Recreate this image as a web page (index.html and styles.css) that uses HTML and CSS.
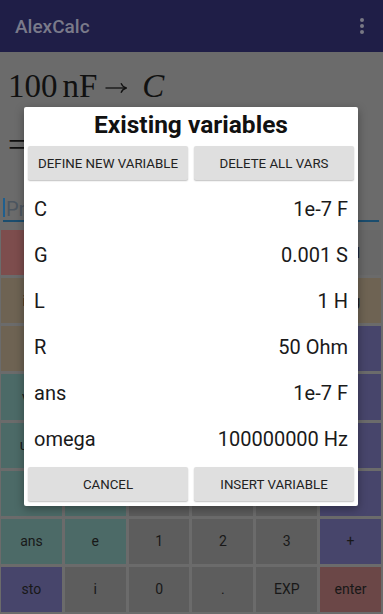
FILE: index.html
```html
<!DOCTYPE html>
<html lang="en">
<head>
<meta charset="utf-8">
<title>AlexCalc</title>
<link rel="stylesheet" href="styles.css">
</head>
<body>
<header class="appbar">
  <div class="title">AlexCalc</div>
  <div class="kebab"><span></span><span></span><span></span></div>
</header>
<section class="display">
  <div class="math"><span>100</span><span class="unit">nF</span><svg class="arrow" width="22" height="12" viewBox="0 0 22 12"><path d="M0.5 6 H21" fill="none" stroke="#111" stroke-width="1.3"/><path d="M16 1.2 Q17.6 5 21.3 6 Q17.6 7 16 10.8" fill="none" stroke="#111" stroke-width="1.3"/></svg><i class="var-i">C</i></div>
  <div class="math result"><span class="eq">=</span><span>100</span><span class="unit">nF</span></div>
  <div class="input"><span class="cursor"></span><span class="placeholder">Press enter to evaluate</span></div>
</section>
<main class="keypad">
  <div class="key red">clr</div><div class="key gray">(</div><div class="key gray">)</div><div class="key gray">^</div><div class="key gray">√</div><div class="key light">del</div>
  <div class="key tan">inv</div><div class="key tan">sin</div><div class="key tan">cos</div><div class="key tan">tan</div><div class="key tan">ln</div><div class="key tan">log</div>
  <div class="key tan">,</div><div class="key tan">π</div><div class="key tan">x²</div><div class="key tan">1/x</div><div class="key tan">!</div><div class="key purple">÷</div>
  <div class="key teal">var</div><div class="key teal">→</div><div class="key gray">7</div><div class="key gray">8</div><div class="key gray">9</div><div class="key purple">×</div>
  <div class="key teal">unit</div><div class="key teal">SI</div><div class="key gray">4</div><div class="key gray">5</div><div class="key gray">6</div><div class="key purple">−</div>
  <div class="key teal">fn</div><div class="key teal">prec</div><div class="key gray">(</div><div class="key gray">)</div><div class="key gray">%</div><div class="key purple">^</div>
  <div class="key teal">ans</div><div class="key teal">e</div><div class="key gray">1</div><div class="key gray">2</div><div class="key gray">3</div><div class="key purple">+</div>
  <div class="key purple">sto</div><div class="key gray">i</div><div class="key gray">0</div><div class="key gray">.</div><div class="key gray">EXP</div><div class="key enter">enter</div>
</main>
<div class="dialog">
  <h1 class="dialog-title">Existing variables</h1>
  <div class="btn-row top">
    <div class="btn">DEFINE NEW VARIABLE</div>
    <div class="btn">DELETE ALL VARS</div>
  </div>
  <ul class="vars">
    <li class="var"><span>C</span><span>1e-7 F</span></li>
    <li class="var"><span>G</span><span>0.001 S</span></li>
    <li class="var"><span>L</span><span>1 H</span></li>
    <li class="var"><span>R</span><span>50 Ohm</span></li>
    <li class="var"><span>ans</span><span>1e-7 F</span></li>
    <li class="var"><span>omega</span><span>100000000 Hz</span></li>
  </ul>
  <div class="btn-row">
    <div class="btn">CANCEL</div>
    <div class="btn">INSERT VARIABLE</div>
  </div>
</div>
</body>
</html>
```
FILE: styles.css
```css
* { box-sizing: border-box; margin: 0; padding: 0; }
html, body { height: 100%; }
body {
  width: 383px;
  height: 614px;
  overflow: hidden;
  position: relative;
  display: flex;
  flex-direction: column;
  background: #6b6b6b;
  font-family: Roboto, "Liberation Sans", sans-serif;
}
.appbar {
  flex: none;
  height: 52px;
  background: #1f1e47;
  display: flex;
  align-items: center;
  justify-content: space-between;
  padding: 0 19px 0 15px;
}
.title { font-size: 19px; font-weight: 500; color: #7a7a8a; }
.kebab { display: flex; flex-direction: column; gap: 2px; }
.kebab span { width: 4px; height: 4px; border-radius: 50%; background: #787884; }

.display {
  flex: none;
  height: 176px;
  padding: 14px 4px 0 3px;
  display: flex;
  flex-direction: column;
}
.math {
  font-family: "Liberation Serif", "DejaVu Serif", serif;
  font-size: 33px;
  line-height: 40px;
  height: 40px;
  color: #111;
  padding-left: 5px;
  white-space: nowrap;
}
.math .unit { margin-left: 5px; }
.math .arrow { margin: 0 15px 0 8px; vertical-align: 3px; }
.math .var-i { font-style: italic; }
.math.result { margin-top: 19px; }
.math .eq { margin-right: 10px; }
.input {
  margin-top: 33px;
  height: 24px;
  border-bottom: 2px solid #1b4d6e;
  display: flex;
  align-items: flex-start;
  overflow: hidden;
}
.cursor { width: 2px; height: 20px; margin-top: -1px; background: #1f5f8f; flex: none; }
.placeholder { font-size: 20px; line-height: 22px; color: #4d5660; margin-left: 1px; white-space: nowrap; }

.keypad {
  flex: 1;
  display: grid;
  grid-template-columns: repeat(6, 1fr);
  grid-template-rows: repeat(8, 1fr);
  gap: 3px;
  padding: 2px 2px 2px 1px;
}
.key {
  display: flex;
  align-items: center;
  justify-content: center;
  font-size: 14px;
  color: #181818;
}
.red { background: #7d4d4d; }
.tan { background: #6e6353; }
.teal { background: #4c6a67; }
.purple { background: #47456b; }
.gray { background: #5d5d5d; }
.light { background: #686868; }
.enter { background: #6b4747; }

.dialog {
  position: absolute;
  left: 24px;
  top: 107px;
  width: 334px;
  background: #fff;
  border-radius: 2px;
  box-shadow: 0 3px 10px rgba(0, 0, 0, 0.35);
  padding: 4px 4px 5px;
}
.dialog-title {
  font-size: 24.5px;
  font-weight: 700;
  line-height: 28px;
  text-align: center;
  color: #111;
}
.btn-row { display: grid; grid-template-columns: 1fr 1fr; gap: 6px; }
.btn-row.top { margin-top: 7px; }
.btn {
  height: 34px;
  background: #dfdfdf;
  border-radius: 2px;
  box-shadow: 0 1px 1.5px rgba(0, 0, 0, 0.25);
  display: flex;
  align-items: center;
  justify-content: center;
  font-size: 13.3px;
  font-weight: 400;
  color: #222;
}
.vars { list-style: none; margin: 6px 0 5px; }
.var {
  height: 46px;
  display: flex;
  align-items: center;
  justify-content: space-between;
  padding: 0 6px;
  font-size: 20px;
  color: #1a1a1a;
}
```
